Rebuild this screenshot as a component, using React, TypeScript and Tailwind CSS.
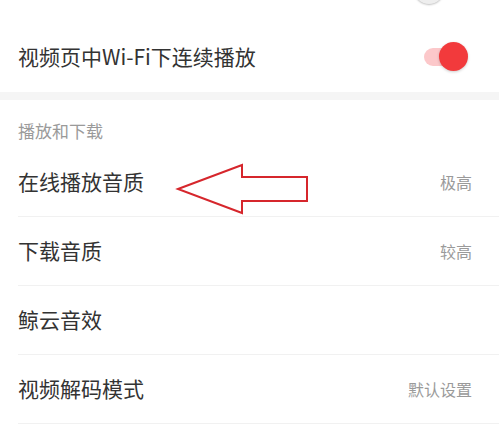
const font = "font-['Noto_Sans_CJK_SC','Noto_Sans',sans-serif]";

function Toggle({ on }: { on: boolean }) {
  return (
    <div className="relative h-[30px] w-[48px]">
      <div
        className={`absolute left-[2px] top-[6px] h-[18px] w-[38px] rounded-full ${on ? "bg-[#fcc8ca]" : "bg-[#e4e4e4]"}`}
      />
      <div
        className={`absolute top-0 h-[29px] w-[29px] rounded-full shadow-[0_1px_3px_rgba(0,0,0,0.2)] ${on ? "left-[17px] bg-[#f23a3c]" : "left-0 bg-[#f4f4f4]"}`}
      />
    </div>
  );
}

function Item({ label, value }: { label: string; value?: string }) {
  return (
    <div className="ml-[18px] flex h-[69px] items-center justify-between border-b border-[#f1f1f1] pr-[27px]">
      <span className="text-[21px] text-[#333]">{label}</span>
      {value && <span className="text-[16px] text-[#9a9a9a]">{value}</span>}
    </div>
  );
}

export default function App() {
  return (
    <div className={`relative h-[427px] w-[499px] overflow-hidden bg-white ${font}`}>
      {/* previous row, cut off */}
      <div className="h-[22px] overflow-hidden">
        <div className="-mt-[26px] flex h-[30px] justify-end pr-[55px]">
          <div className="h-[30px] w-[30px] rounded-full bg-[#eeeeee] shadow-[0_1px_2px_rgba(0,0,0,0.25)]" />
        </div>
      </div>

      <div className="flex h-[70px] items-center justify-between pl-[18px] pr-[29px]">
        <span className="text-[21px] text-[#333]">视频页中Wi-Fi下连续播放</span>
        <Toggle on />
      </div>

      <div className="h-[8px] bg-[#f5f5f5]" />

      <div className="flex h-[48px] items-end pl-[18px] pb-[5px]">
        <span className="text-[17px] text-[#9a9a9a]">播放和下载</span>
      </div>

      <Item label="在线播放音质" value="极高" />
      <Item label="下载音质" value="较高" />
      <Item label="鲸云音效" />
      <Item label="视频解码模式" value="默认设置" />

      {/* annotation arrow */}
      <svg className="absolute left-0 top-0" width="499" height="427" viewBox="0 0 499 427">
        <polygon
          points="178,189 242,165 242,177 307,177 307,201 242,201 242,213"
          fill="none"
          stroke="#d6262c"
          strokeWidth="2"
          strokeLinejoin="miter"
        />
      </svg>
    </div>
  );
}
